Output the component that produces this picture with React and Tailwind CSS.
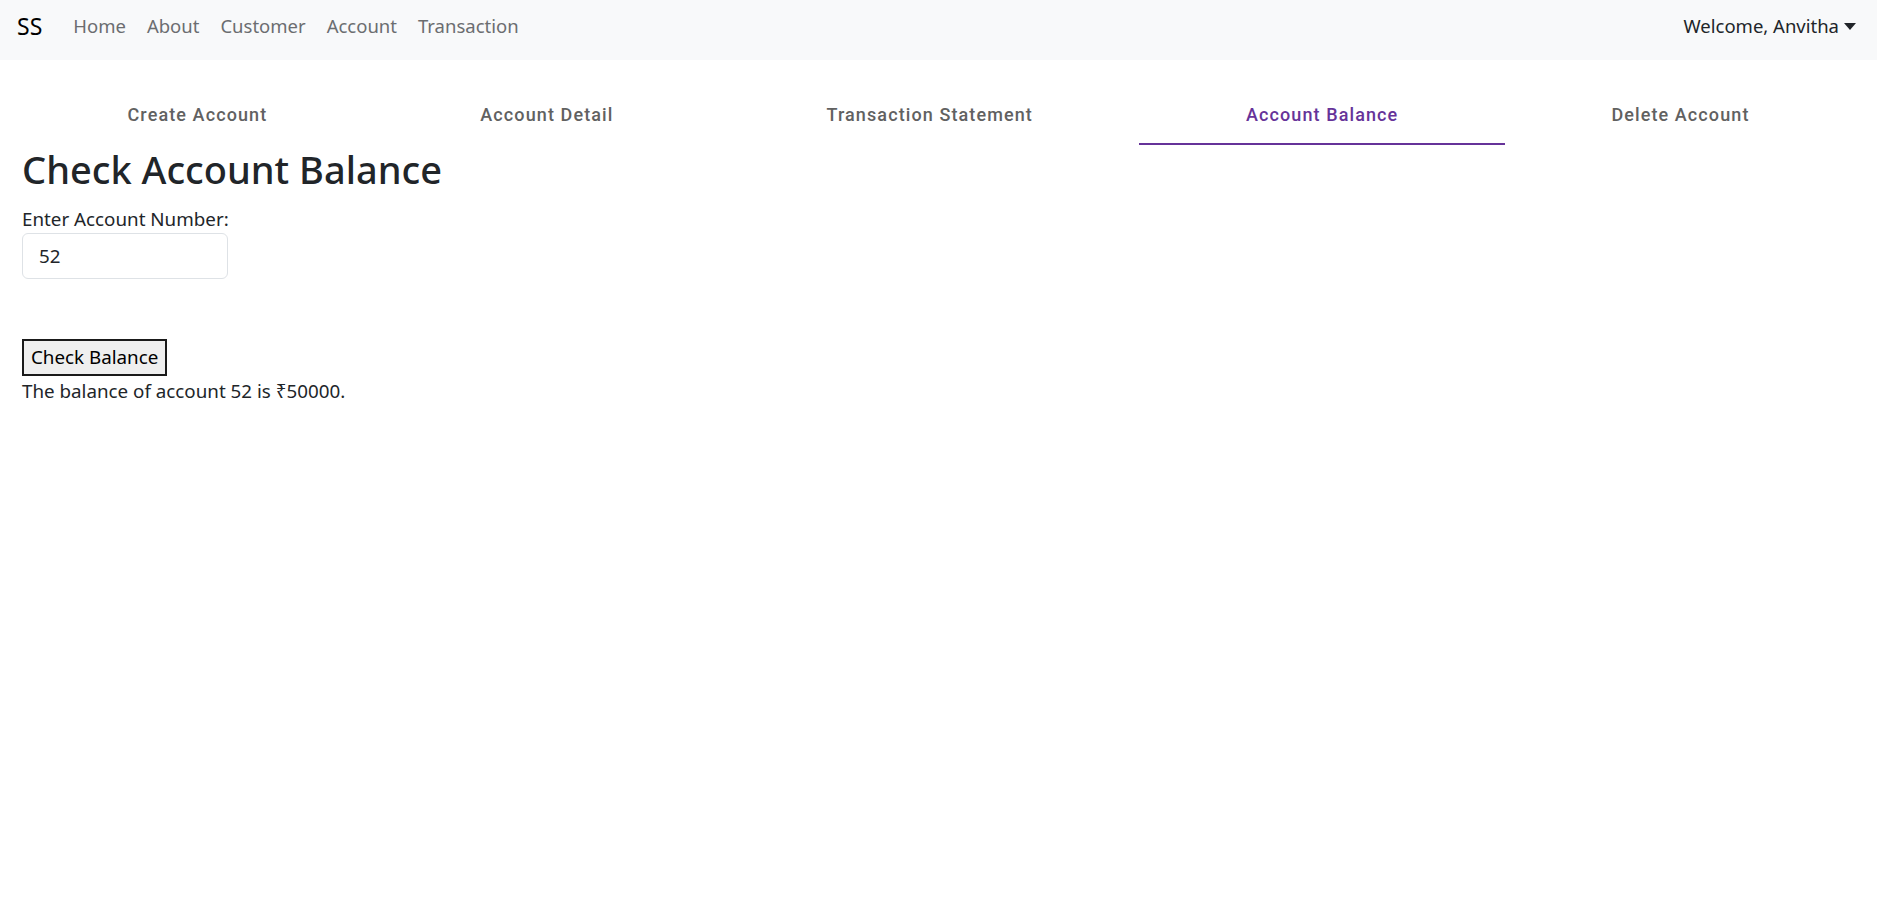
import React, { useState } from 'react';

const navLinks = ['Home', 'About', 'Customer', 'Account', 'Transaction'];
const tabs = ['Create Account', 'Account Detail', 'Transaction Statement', 'Account Balance', 'Delete Account'];

const Navbar = () => (
  <nav className="h-[60px] bg-[#f8f9fa] flex items-center pl-[17px] pr-[21px] pb-[8px]">
    <span className="text-[23px] text-black mr-[31px]">SS</span>
    <div className="flex items-center gap-[21px]">
      {navLinks.map(l => (
        <a key={l} className="text-[18.5px] text-[#6b6d70] cursor-pointer">{l}</a>
      ))}
    </div>
    <div className="ml-auto flex items-center text-[18.5px] text-[#212529]">
      Welcome, Anvitha
      <span className="ml-[5px] w-0 h-0 border-l-[6px] border-r-[6px] border-t-[7px] border-l-transparent border-r-transparent border-t-[#212529]" />
    </div>
  </nav>
);

const Tabs = ({ active, onChange }) => (
  <div className="flex mx-[21px] mt-[25px]">
    {tabs.map((t, i) => (
      <button
        key={t}
        onClick={() => onChange(i)}
        className={`flex-auto h-[60px] flex items-center justify-center border-b-2 font-['Roboto',sans-serif] font-medium text-[18px] tracking-[1.1px] ${i === active ? 'text-[#663399] border-[#663399]' : 'text-[#616161] border-transparent'}`}
      >
        {t}
      </button>
    ))}
  </div>
);

export default function App() {
  const [active, setActive] = useState(3);
  const [acct, setAcct] = useState('52');

  return (
    <div className="w-[1877px] min-h-[915px] bg-white font-['Noto_Sans',sans-serif]">
      <Navbar />
      <Tabs active={active} onChange={setActive} />
      <div className="px-[22px] text-[#212529]">
        <h2 className="text-[38px] font-medium leading-[1.2] mt-[2px] mb-[13px]">Check Account Balance</h2>
        <label className="block text-[18.8px] leading-[26px]">Enter Account Number:</label>
        <input
          value={acct}
          onChange={e => setAcct(e.target.value)}
          className="mt-[1px] w-[206px] h-[46px] border border-[#dee2e6] rounded-[6px] px-[16px] text-[18.8px] outline-none"
        />
        <div className="h-[60px]" />
        <button className="h-[37px] px-[7px] bg-[#efefef] border-2 border-[#1a1a1a] text-[18.8px] text-black">Check Balance</button>
        <p className="text-[18.8px] leading-[26px] mt-[2px]">The balance of account 52 is ₹50000.</p>
      </div>
    </div>
  );
}
